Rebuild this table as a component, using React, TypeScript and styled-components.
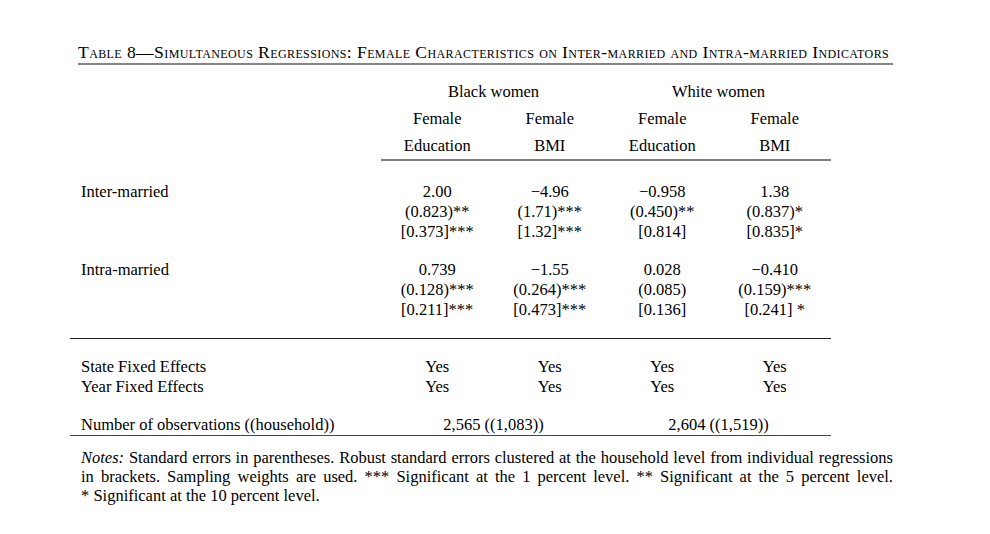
import styled, { createGlobalStyle } from "styled-components"

const GlobalStyle = createGlobalStyle`
  html, body {
    margin: 0;
    padding: 0;
    background: #ffffff;
  }
  body {
    font-family: "Liberation Serif", "Times New Roman", serif;
    color: #000;
  }
`

const Page = styled.div`
  width: 990px;
  height: 534px;
  box-sizing: border-box;
  padding: 41px 0 0 70px;
`

const Caption = styled.div`
  margin-left: 8px;
  width: 815px;
  box-sizing: border-box;
  padding-right: 8px;
  text-align: center;
  font-size: 17.6px;
  letter-spacing: 0.4px;
  font-variant: small-caps;
  white-space: nowrap;
  line-height: 22px;
  border-bottom: 2px solid #858585;
`

const Grid = styled.div`
  margin-top: 13px;
  width: 761px;
  display: grid;
  grid-template-columns: 311px repeat(4, 112.5px);
  font-size: 16.5px;
`

const Head = styled.div<{ $span?: number; $rule?: boolean }>`
  grid-column: span ${(p) => p.$span ?? 1};
  text-align: center;
  line-height: 27px;
  border-bottom: ${(p) => (p.$rule ? "2px solid #7f7f7f" : "none")};
`

const Blank = styled.div``

const Label = styled.div<{ $top?: number; $bottom?: number; $rule?: string }>`
  padding: ${(p) => p.$top ?? 0}px 0 ${(p) => p.$bottom ?? 0}px 11px;
  line-height: 20px;
  border-bottom: ${(p) => p.$rule ?? "none"};
`

const Cell = styled.div<{ $top?: number; $bottom?: number; $span?: number; $rule?: string }>`
  grid-column: span ${(p) => p.$span ?? 1};
  padding: ${(p) => p.$top ?? 0}px 0 ${(p) => p.$bottom ?? 0}px;
  text-align: center;
  line-height: 20px;
  border-bottom: ${(p) => p.$rule ?? "none"};
`

const Notes = styled.p`
  margin: 12px 0 0 11px;
  width: 812px;
  font-size: 16.5px;
  line-height: 19px;
  text-align: justify;
`

type Coef = { b: string; se: string; cl: string }

const inter: Coef[] = [
  { b: "2.00", se: "(0.823)**", cl: "[0.373]***" },
  { b: "\u22124.96", se: "(1.71)***", cl: "[1.32]***" },
  { b: "\u22120.958", se: "(0.450)**", cl: "[0.814]" },
  { b: "1.38", se: "(0.837)*", cl: "[0.835]*" },
]

const intra: Coef[] = [
  { b: "0.739", se: "(0.128)***", cl: "[0.211]***" },
  { b: "\u22121.55", se: "(0.264)***", cl: "[0.473]***" },
  { b: "0.028", se: "(0.085)", cl: "[0.136]" },
  { b: "\u22120.410", se: "(0.159)***", cl: "[0.241] *" },
]

const CoefCell = ({ c, top, bottom, rule }: { c: Coef; top: number; bottom: number; rule?: string }) => (
  <Cell $top={top} $bottom={bottom} $rule={rule}>
    <div>{c.b}</div>
    <div>{c.se}</div>
    <div>{c.cl}</div>
  </Cell>
)

const darkRule = "1.5px solid #222"
const bottomRule = "1.5px solid #474747"

export default function App() {
  return (
    <>
      <GlobalStyle />
      <Page>
        <Caption>Table 8—Simultaneous Regressions: Female Characteristics on Inter-married and Intra-married Indicators</Caption>
        <Grid>
          <Blank />
          <Head $span={2}>Black women</Head>
          <Head $span={2}>White women</Head>

          <Blank />
          <Head>Female</Head>
          <Head>Female</Head>
          <Head>Female</Head>
          <Head>Female</Head>

          <Blank />
          <Head $rule>Education</Head>
          <Head $rule>BMI</Head>
          <Head $rule>Education</Head>
          <Head $rule>BMI</Head>

          <Label $top={21}>Inter-married</Label>
          {inter.map((c, i) => (
            <CoefCell key={i} c={c} top={21} bottom={0} />
          ))}

          <Label $top={18} $bottom={18} $rule={darkRule}>Intra-married</Label>
          {intra.map((c, i) => (
            <CoefCell key={i} c={c} top={18} bottom={18} rule={darkRule} />
          ))}

          <Label $top={18}>State Fixed Effects</Label>
          <Cell $top={18}>Yes</Cell>
          <Cell $top={18}>Yes</Cell>
          <Cell $top={18}>Yes</Cell>
          <Cell $top={18}>Yes</Cell>

          <Label>Year Fixed Effects</Label>
          <Cell>Yes</Cell>
          <Cell>Yes</Cell>
          <Cell>Yes</Cell>
          <Cell>Yes</Cell>

          <Label $top={18} $rule={bottomRule}>Number of observations ((household))</Label>
          <Cell $top={18} $span={2} $rule={bottomRule}>2,565 ((1,083))</Cell>
          <Cell $top={18} $span={2} $rule={bottomRule}>2,604 ((1,519))</Cell>
        </Grid>
        <Notes>
          <i>Notes:</i> Standard errors in parentheses. Robust standard errors clustered at the household level from individual regressions in brackets. Sampling weights are used. *** Significant at the 1 percent level. ** Significant at the 5 percent level. *{"\u00a0"}Significant at the 10 percent level.
        </Notes>
      </Page>
    </>
  )
}
